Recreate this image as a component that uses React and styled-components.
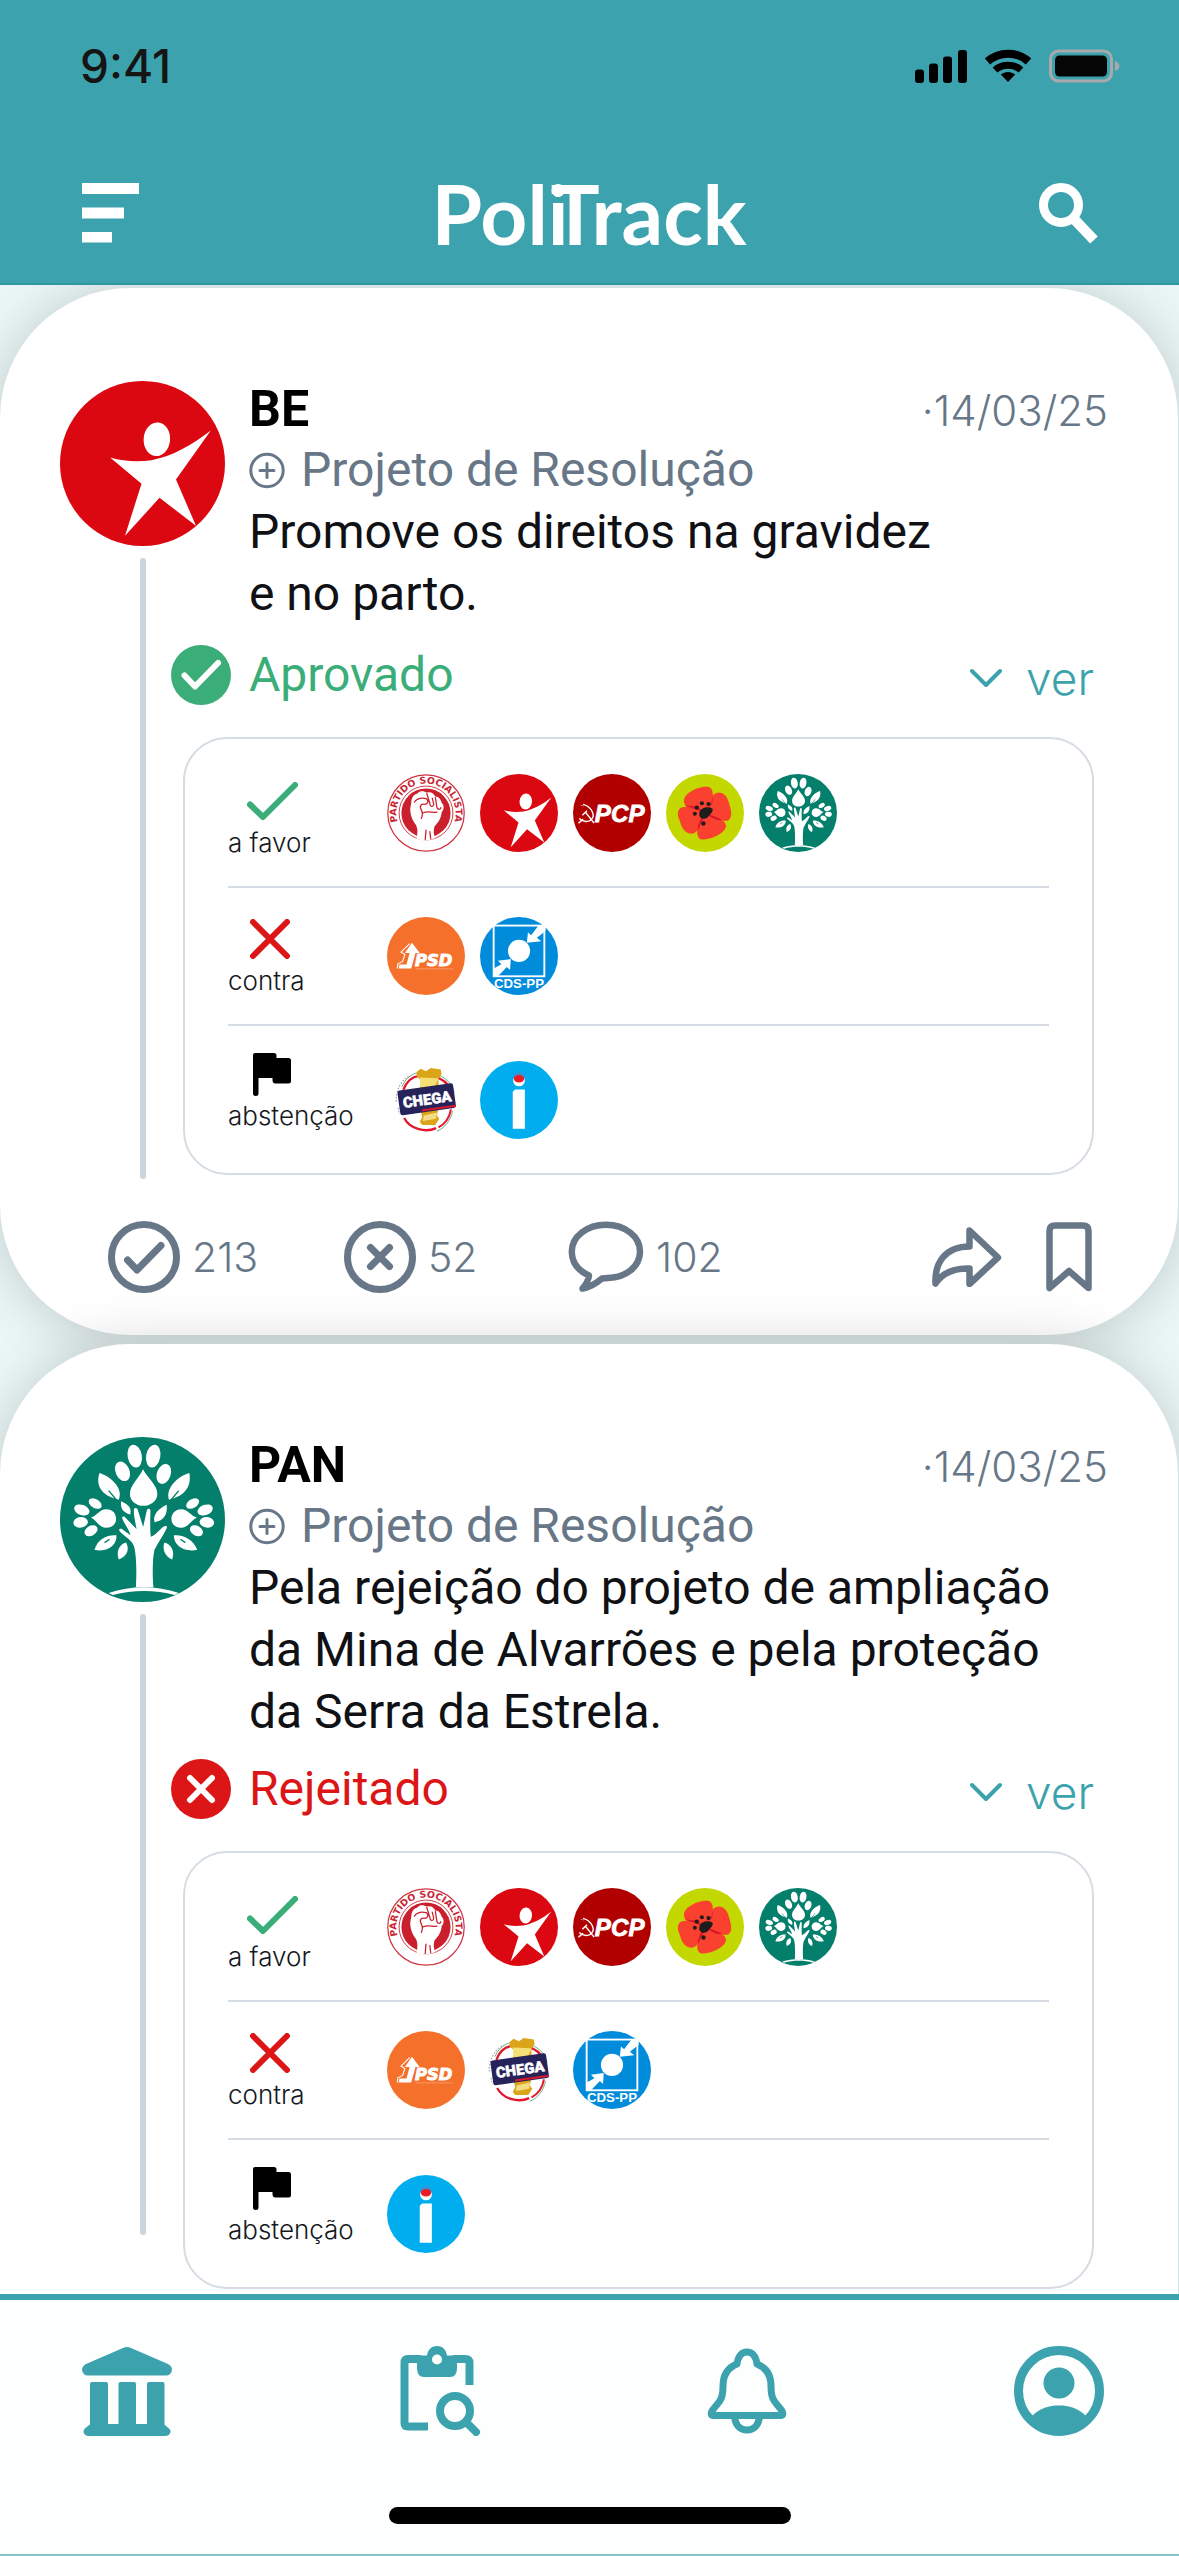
import React from 'react';
import styled, { createGlobalStyle } from 'styled-components';

const teal = '#3ca3ae';
const slate = '#677787';
const green = '#3bad78';
const red = '#dc1617';
const line = '#d5dce3';
const body = 'Roboto, "Liberation Sans", sans-serif';
const light = 'Inter, "Liberation Sans", sans-serif';

const GlobalStyle = createGlobalStyle`
  *, *::before, *::after { box-sizing: border-box; }
  body { margin: 0; background: #eaf7f6; font-family: ${body}; color: #0f1114; }
  h1, h2, p, ul { margin: 0; padding: 0; }
  ul { list-style: none; }
  button { border: 0; padding: 0; background: none; color: inherit; font: inherit; cursor: pointer; }
  a { color: inherit; text-decoration: none; }
  svg { display: block; flex: none; }
`;

const Screen = styled.div`
  display: flex;
  flex-direction: column;
  height: 100vh;
`;

const Header = styled.header`
  flex: none;
  background: ${teal};
  border-bottom: 2px solid #3097a1;
`;

const StatusBar = styled.div`
  display: flex;
  align-items: center;
  justify-content: space-between;
  height: 131px;
  padding: 0 58px 0 80px;
`;

const Clock = styled.span`
  font: 500 46px/1 ${light};
  color: #151515;
`;

const StatusIcons = styled.div`
  display: flex;
  align-items: center;
  gap: 18px;
`;

const TitleBar = styled.div`
  display: flex;
  align-items: center;
  justify-content: space-between;
  height: 152px;
  padding: 12px 80px 0 82px;
  color: #fff;
`;

const Logo = styled.h1`
  font: 700 82px/96px Lato, "Liberation Sans", sans-serif;
`;

const LogoCap = styled.span`
  margin-left: -18px;
`;

const IconButton = styled.button`
  display: flex;
  align-items: center;
`;

const Feed = styled.main`
  flex: 1;
  min-height: 0;
  display: flex;
  flex-direction: column;
  gap: 9px;
  padding: 3px 1px 0 0;
  overflow: hidden;
`;

const Card = styled.article`
  flex: none;
  padding: 93px 70px 42px 60px;
  border-radius: 130px;
  background: #fff;
  box-shadow: 0 2px 56px rgba(0, 0, 0, 0.18);
  &:last-child { min-height: 1104px; }
`;

const CardMain = styled.div`
  display: grid;
  grid-template-columns: 165px minmax(0, 1fr);
  grid-template-rows: auto auto 1fr;
  column-gap: 24px;
`;

const Thread = styled.div`
  grid-row: 1 / span 3;
  grid-column: 1;
  display: flex;
  flex-direction: column;
  align-items: center;
  gap: 12px;
`;

const ThreadLine = styled.div`
  width: 6px;
  height: 621px;
  border-radius: 3px;
  background: #ccd4dc;
`;

const Heading = styled.div`
  grid-column: 2;
  display: flex;
  flex-direction: column;
`;

const TopRow = styled.div`
  display: flex;
  justify-content: space-between;
  height: 58px;
`;

const Party = styled.h2`
  font: 700 50px/56px ${body};
  color: #000;
`;

const PostDate = styled.time`
  font: 300 42px/60px ${light};
  color: ${slate};
`;

const Kind = styled.p`
  display: flex;
  align-items: center;
  gap: 16px;
  font-size: 48px;
  line-height: 62px;
  color: ${slate};
`;

const Summary = styled.p`
  min-height: 128px;
  font-size: 48px;
  line-height: 62px;
  white-space: pre-line;
`;

const Outcome = styled.div`
  grid-column: 2;
  display: flex;
  align-items: center;
  justify-content: space-between;
  height: 92px;
  margin: 0 14px 16px -78px;
`;

const Verdict = styled.p`
  display: flex;
  align-items: center;
  gap: 18px;
  font-size: 48px;
  line-height: 60px;
  color: ${(p) => p.$color};
`;

const More = styled.button`
  display: flex;
  align-items: center;
  gap: 24px;
  padding-top: 6px;
  font: 300 46px/56px ${light};
  color: ${teal};
`;

const Panel = styled.ul`
  grid-column: 2;
  align-self: start;
  margin-left: -66px;
  margin-right: 14px;
  padding: 0 43px;
  border: 2px solid ${line};
  border-radius: 44px;
`;

const VoteRow = styled.li`
  display: grid;
  grid-template-columns: 159px minmax(0, 1fr);
  height: ${(p) => p.$height}px;
  & + & { border-top: 2px solid ${line}; }
`;

const VoteLabel = styled.div`
  padding-top: ${(p) => p.$top}px;
  font: 300 26px/36px ${light};
  color: #15181c;
`;

const VoteIcon = styled.div`
  display: flex;
  align-items: center;
  justify-content: center;
  width: 88px;
  height: 48px;
`;

const Logos = styled.div`
  display: flex;
  align-items: center;
  gap: 15px;
`;

const Actions = styled.div`
  display: grid;
  grid-template-columns: 236px 224px minmax(0, 1fr) auto auto;
  align-items: center;
  padding: 42px 16px 0 48px;
`;

const Action = styled.button`
  display: flex;
  align-items: center;
  gap: 12px;
  font: 300 41px/72px ${light};
  color: ${slate};
  & + &:last-child { margin-left: 44px; }
`;

const TabBar = styled.nav`
  flex: none;
  border-top: 6px solid ${teal};
  border-bottom: 2px solid #86c6cc;
  background: #fdfefe;
`;

const Tabs = styled.div`
  display: flex;
  justify-content: space-between;
  padding: 46px 75px 0 82px;
  color: ${teal};
`;

const HomeIndicator = styled.div`
  width: 402px;
  height: 17px;
  margin: 71px auto 30px;
  border-radius: 9px;
  background: #000;
`;

/* ---------- party emblems ---------- */

const Emblem = ({ size = 78, label, children }) => (
  <svg width={size} height={size} viewBox="0 0 100 100" role="img" aria-label={label}>{children}</svg>
);

const BE = ({ size }) => (
  <Emblem size={size} label="Bloco de Esquerda">
    <circle cx="50" cy="50" r="50" fill="#dc0811" />
    <ellipse cx="58.7" cy="35.3" rx="8" ry="10.2" fill="#fff" transform="rotate(5 58.7 35.3)" />
    <path fill="#fff" d="M30.4 46.4C39 49 48 49 55.5 48C68 45.5 80 39 91.4 30L70.3 59.7L82.4 87.7L60.3 70.8L39.4 93.8L49.4 62.3Z" />
  </Emblem>
);

const PAN = ({ size }) => (
  <Emblem size={size} label="PAN">
    <circle cx="50" cy="50" r="50" fill="#047f6c" />
    <g fill="#fff">
      <ellipse cx="45.3" cy="11.6" rx="4.3" ry="7" transform="rotate(-10 45.3 11.6)" />
      <ellipse cx="56.5" cy="11.6" rx="4.3" ry="7" transform="rotate(10 56.5 11.6)" />
      <ellipse cx="37.9" cy="20.8" rx="4.2" ry="6.2" transform="rotate(-24 37.9 20.8)" />
      <ellipse cx="62.9" cy="22.4" rx="4.2" ry="6.2" transform="rotate(20 62.9 22.4)" />
      <path d="M50.3 19.6C53 25 59 29 59 34.5C59 38.5 55 41.7 50.6 41.7C46 41.7 42.4 38.5 42.4 34.5C42.4 29 48 25 50.3 19.6Z" />
      <path d="M23.9 21.8C31 24 38.5 31 35.6 38C27 36 21 31 23.9 21.8Z" />
      <path d="M78.4 21.8C71 24 63.8 31 66 38C74.5 36 80 31 78.4 21.8Z" />
      <path d="M37 39C41.5 41 43.5 43 42.6 47C38 46 36.6 43 37 39Z" />
      <path d="M64.7 41C59.5 43.5 56 47 57.3 51.6C63 50.5 65.2 47 64.7 41Z" />
      <path d="M18.8 48.8C22 48 24 43.8 28 43.8C32 43.8 34 46.5 34 49.6C34 53 31.5 55 28 55C24 55 22 50.5 18.8 48.8Z" />
      <path d="M83 48.8C79.5 48 77.5 43.8 73.4 43.8C70 43.8 67.5 46.5 67.5 49.6C67.5 53 70 55 73.4 55C77.5 55 79.5 50.5 83 48.8Z" />
      <ellipse cx="13.2" cy="44.2" rx="4.8" ry="3.1" transform="rotate(20 13.2 44.2)" />
      <ellipse cx="21.3" cy="40.3" rx="4.3" ry="2.7" transform="rotate(32 21.3 40.3)" />
      <ellipse cx="12.5" cy="51.7" rx="4.4" ry="3.2" transform="rotate(-8 12.5 51.7)" />
      <ellipse cx="18.8" cy="56.8" rx="4.2" ry="3" transform="rotate(-30 18.8 56.8)" />
      <ellipse cx="88" cy="44.2" rx="4.8" ry="3.1" transform="rotate(-20 88 44.2)" />
      <ellipse cx="80.4" cy="40.3" rx="4.3" ry="2.7" transform="rotate(-32 80.4 40.3)" />
      <ellipse cx="89" cy="51.7" rx="4.4" ry="3.2" transform="rotate(8 89 51.7)" />
      <ellipse cx="82.7" cy="56.8" rx="4.2" ry="3" transform="rotate(30 82.7 56.8)" />
      <path d="M34.2 59.6C34.6 65.5 29 70 20.9 68.4C22.5 62.5 28 59 34.2 59.6Z" />
      <path d="M69 59.6C69 65.5 74.5 70 83.2 68.4C81 62.5 75 59 69 59.6Z" />
      <path d="M40 64C42.3 68 41 72 35.6 74.3C34 69.5 35.5 65.5 40 64Z" />
      <path d="M63.3 64C61.8 68 63.5 72.5 68 74.3C69.5 69.5 68 65.5 63.3 64Z" />
      <path d="M46 91C46.4 84 46.6 72 44.8 66C43 62 39 60.5 36 57C35.5 55.5 37 55.2 38.5 56.5L42.8 59.5C41.5 55.5 38.5 52 37.6 49C37.8 47.8 39.2 48 40 49.2L46.4 55.8C45.5 51 44.5 47 44.8 43.6C45.5 42.6 46.8 43 47.2 44.4L50.4 54.5L52.6 44.6C53 43.2 54.6 43.2 54.8 44.6C54.8 49 54.4 55 55 60.5C57.8 59.8 60 56.5 62.4 54.6C64 53.4 65.4 53.8 64.6 55.4C62 60.5 59.4 64 57.2 68.5C56 74 56 84 56.6 91Z" />
      <path d="M29.5 94.6C43 89.8 58.5 89.8 72 94.6L69.5 95.8C58 92.6 44 92.6 32 95.8Z" />
    </g>
    <path d="M29.5 32.5L34.5 38.5M72 32.5L67 38.5M30 62L27 64M73 62L76 64" stroke="#047f6c" strokeWidth="0.8" />
  </Emblem>
);

const PS = () => (
  <Emblem label="Partido Socialista">
    <defs>
      <path id="ps-arc" d="M21.7 75.5A38 38 0 1 1 78.3 75.5" />
    </defs>
    <circle cx="50" cy="50" r="49" fill="#fff" stroke="#cf3340" strokeWidth="1.6" />
    <circle cx="50" cy="50" r="34.5" fill="none" stroke="#cf3340" strokeWidth="1.2" />
    <circle cx="50" cy="50" r="31.5" fill="#ca1f2d" />
    <text fill="#c92533" fontFamily="DejaVu Sans, sans-serif" fontWeight="700" fontSize="12">
      <textPath href="#ps-arc" startOffset="50%" textAnchor="middle">PARTIDO SOCIALISTA</textPath>
    </text>
    <path fill="#fff" d="M38 83C39 76 40 71 37 65C31 57 28 47 31 38C31 31 34 26 39 25C42 21 48 22 51 24C56 22 60 25 62 29C67 29 69 33 70 37C74 40 73 47 70 49C70 56 65 63 61 67C59 73 60 78 62 82C54 86 45 86 38 83Z" />
    <path fill="none" stroke="#ca1f2d" strokeWidth="1.6" strokeLinecap="round" d="M35 36C40 30 45 30 51 32C54 35 52 39 48 39C44 38 41 41 44 46C46 50 46 53 44 57M51 25L55 38C55 42 59 43 60 39L58 31M62 30L64 43C65 46 69 46 69 43M46 50C52 47 59 50 64 49M50 72L49 84M55 74L56 83" />
  </Emblem>
);

const PCP = () => (
  <Emblem label="PCP">
    <circle cx="50" cy="50" r="50" fill="#b10000" />
    <text x="28" y="62" fill="#fff" stroke="#fff" strokeWidth="1" fontFamily="Liberation Sans, sans-serif" fontWeight="700" fontStyle="italic" fontSize="31">PCP</text>
    <path fill="none" stroke="#fff" strokeWidth="1.8" d="M13 39C24 42 31 55 21 60C16 62 11 60 8 57M7 63L13 58M16 49L27 63M12 53L18 47" />
    <path d="M10 40L14 41" stroke="#e46a6a" strokeWidth="1.4" />
  </Emblem>
);

const Livre = () => (
  <Emblem label="Livre">
    <circle cx="50" cy="50" r="50" fill="#c2d800" />
    <g fill="#fa4130">
      <path d="M23 35C22 24 45 14 56 17C63 22 61 38 51 50C40 50 24 46 23 35Z" />
      <path d="M60 28C66 20 77 24 80 35C84 47 86 56 79 60C69 60 58 58 51 50C55 42 56 34 60 28Z" />
      <path d="M51 50C61 54 75 57 77 66C77 74 62 84 45 84C38 81 40 70 41 66Z" />
      <path d="M17 45C22 39 38 42 51 50C47 60 43 72 36 76C29 78 21 74 18 61C15 54 14 50 17 45Z" />
    </g>
    <path fill="#d9152b" d="M51 50L57 40L61 27L59 38ZM51 50L34 44L24 40L40 42ZM51 50C58 57 66 60 72 59C66 55 58 53 51 50ZM51 50C48 58 43 66 41 72C40 66 44 56 51 50Z" />
    <path fill="#1d1d1b" d="M43 49C45 42 56 41 60 45C60 50 56 52 53 56C48 59 41 57 43 49Z" />
    <g fill="#1d1d1b">
      <circle cx="39.5" cy="43" r="2.7" /><circle cx="46" cy="37.5" r="2.7" /><circle cx="54.5" cy="38.5" r="2.7" />
      <circle cx="37" cy="51" r="2.6" /><circle cx="48" cy="63.5" r="2.8" />
    </g>
  </Emblem>
);

const PSD = () => (
  <Emblem label="PSD">
    <circle cx="50" cy="50" r="50" fill="#f5702a" />
    <text x="36" y="62.5" fill="#fff" stroke="#fff" strokeWidth="1.2" fontFamily="DejaVu Sans, sans-serif" fontWeight="700" fontStyle="italic" fontSize="21">PSD</text>
    <path fill="#fff" d="M32 33L42 46L36.5 46L31 66L15 66L16 61L25 61L29 46L23 46Z" />
    <path fill="none" stroke="#fff" strokeWidth="1.4" d="M29 34L18 45L23 48L20 57L14 60L13 66" />
    <path d="M37 66.5H84" stroke="#fbc3a2" strokeWidth="1" strokeDasharray="2 1" />
  </Emblem>
);

const CDS = () => (
  <Emblem label="CDS-PP">
    <circle cx="50" cy="50" r="50" fill="#008bdb" />
    <rect x="17.5" y="11" width="65" height="65" fill="none" stroke="#fff" strokeWidth="2.4" />
    <circle cx="50" cy="43.5" r="14.2" fill="#fff" />
    <path fill="#fff" d="M60 33L61.5 20L65.5 23.5L75 11L84 10V18L73 26.5L78.5 31Z" />
    <path fill="#fff" d="M39.5 54L38.5 68L34.5 64L23 76L17 77V66.5L27.5 60.5L23 56Z" />
    <text x="50" y="90.5" textAnchor="middle" fill="#fff" fontFamily="Liberation Sans, sans-serif" fontWeight="700" fontSize="17">CDS-PP</text>
  </Emblem>
);

const Chega = () => (
  <Emblem label="Chega">
    <path fill="none" stroke="#e3172c" strokeWidth="3" d="M21 37C25 26 33 20 41 19M60 20C70 22 78 28 82 38M22 73C30 88 50 92 63 86" />
    <path fill="none" stroke="#3d9a5f" strokeWidth="1" d="M19 33C24 22 32 16 40 15M66 18C76 22 84 30 86 40M84 64C82 76 74 86 64 90" />
    <path fill="none" stroke="#9b9ba8" strokeWidth="1.4" strokeDasharray="2 2" d="M12 52C11 38 18 24 30 18M14 60L16 68" />
    <path fill="none" stroke="#e3172c" strokeWidth="2.6" d="M82 62C80 73 74 81 66 85" />
    <path fill="#dba51a" d="M38 14L43 10L50 13L56 9L69 11L70 17L66 22L66 36L42 38L44 25L38 20Z" />
    <path fill="#f6df75" d="M42 21L66 22L62 32L43 34Z" />
    <path fill="#dba51a" d="M43 62L66 60L64 70L67 74L62 82L45 82L42 78L45 72Z" />
    <path fill="#f3dc84" d="M47 70L64 66L63 74L46 77Z" />
    <g transform="rotate(-8 51 50)">
      <rect x="15" y="33" width="72" height="32" rx="3" fill="#26235b" />
      <path d="M43 62.5H87" stroke="#d9182b" strokeWidth="2.4" />
      <text x="51.5" y="56" textAnchor="middle" fill="#fff" stroke="#fff" strokeWidth="0.6" fontFamily="Roboto, sans-serif" fontWeight="900" fontSize="19">CHEGA</text>
    </g>
  </Emblem>
);

const IL = () => (
  <Emblem label="Iniciativa Liberal">
    <circle cx="50" cy="50" r="50" fill="#00aeef" />
    <path fill="#fff" d="M45 36.5H57.5V87H42V39.5Z" />
    <circle cx="50" cy="25" r="7.5" fill="#fff" />
    <path fill="#3c8fd0" d="M42.6 22C42.6 12 57.4 12 57.4 22Z" />
    <ellipse cx="50" cy="22.8" rx="6.6" ry="4.8" fill="#ed1c24" />
  </Emblem>
);

const emblems = { BE, PAN, PS, PCP, Livre, PSD, CDS, Chega, IL };

/* ---------- interface icons ---------- */

const Signal = () => (
  <svg width="52" height="34" viewBox="0 0 52 34" aria-hidden="true">
    <rect x="0" y="20.5" width="9" height="13.5" rx="3" /><rect x="14" y="14.5" width="9" height="19.5" rx="3" />
    <rect x="28" y="7.5" width="9" height="26.5" rx="3" /><rect x="43" y="1" width="9" height="33" rx="3" />
  </svg>
);

const Wifi = () => (
  <svg width="46" height="34" viewBox="0 0 46 34" aria-hidden="true">
    <path fill="none" stroke="#000" strokeWidth="8" d="M2.5 12.5C14 2 32 2 43.5 12.5" />
    <path fill="none" stroke="#000" strokeWidth="7" d="M10 21C17 14.5 29 14.5 36 21" />
    <path d="M15.8 25.5C20 22 26 22 30.2 25.5L23 33Z" />
  </svg>
);

const Battery = () => (
  <svg width="72" height="34" viewBox="0 0 72 34" aria-hidden="true">
    <rect x="1.5" y="2" width="61" height="30" rx="8" fill="none" stroke="#a9a9ab" strokeWidth="3" />
    <rect x="6" y="6.5" width="52" height="21" rx="4.5" fill="#050505" />
    <path fill="#a9a9ab" d="M66 12C72 14 72 20 66 22Z" />
  </svg>
);

const Menu = () => (
  <svg width="57" height="60" viewBox="0 0 57 60" aria-hidden="true" fill="#fff">
    <rect width="57" height="11" /><rect y="24.5" width="42" height="11" /><rect y="49" width="30" height="10.5" />
  </svg>
);

const Search = () => (
  <svg width="60" height="63" viewBox="0 0 60 63" aria-hidden="true" fill="none" stroke="#fff">
    <circle cx="22" cy="23" r="17.5" strokeWidth="9" />
    <path d="M34.5 36.5L55 58" strokeWidth="10.5" />
  </svg>
);

const Plus = () => (
  <svg width="36" height="37" viewBox="0 0 36 37" aria-hidden="true" fill="none" stroke={slate} strokeWidth="3">
    <circle cx="18" cy="18.5" r="16.2" /><path strokeLinecap="round" d="M11 18.5H25M18 11.5V25.5" />
  </svg>
);

const BadgeCheck = () => (
  <svg width="60" height="60" viewBox="0 0 60 60" aria-hidden="true">
    <circle cx="30" cy="30" r="30" fill={green} />
    <path fill="none" stroke="#fff" strokeWidth="6" strokeLinecap="round" strokeLinejoin="round" d="M13.5 30.5L24 41.5L47 18" />
  </svg>
);

const BadgeCross = () => (
  <svg width="60" height="60" viewBox="0 0 60 60" aria-hidden="true">
    <circle cx="30" cy="30" r="30" fill={red} />
    <path stroke="#fff" strokeWidth="6" strokeLinecap="round" d="M19 19L41 41M41 19L19 41" />
  </svg>
);

const Chevron = () => (
  <svg width="32" height="20" viewBox="0 0 32 20" aria-hidden="true" fill="none" stroke={teal} strokeWidth="4" strokeLinecap="round" strokeLinejoin="round">
    <path d="M2 3L16 17L30 3" />
  </svg>
);

const Favor = () => (
  <svg width="51" height="39" viewBox="0 0 51 39" aria-hidden="true" fill="none" stroke={green} strokeWidth="6" strokeLinecap="round" strokeLinejoin="round">
    <path d="M3 22.5L16 35L48 3" />
  </svg>
);

const Against = () => (
  <svg width="46" height="40" viewBox="0 0 46 40" aria-hidden="true" stroke={red} strokeWidth="6" strokeLinecap="round">
    <path d="M4 3L38 37M38 3L4 37" />
  </svg>
);

const Flag = () => (
  <svg width="38" height="43" viewBox="0 0 38 43" aria-hidden="true">
    <path d="M2 0H21Q23.5 0 23.5 2.5V5H35.5Q38 5 38 7.5V28Q38 30.5 35.5 30.5H22.5Q19.5 30.5 19.5 27V25H5.5V40.5Q5.5 43 2.8 43Q0 43 0 40.5V2Q0 0 2 0Z" />
  </svg>
);

const LikeIcon = () => (
  <svg width="72" height="72" viewBox="0 0 72 72" aria-hidden="true" fill="none" stroke={slate} strokeWidth="7">
    <circle cx="36" cy="36" r="32.5" />
    <path strokeLinecap="round" strokeLinejoin="round" d="M19.5 39L29 49L53 24.5" />
  </svg>
);

const DislikeIcon = () => (
  <svg width="72" height="72" viewBox="0 0 72 72" aria-hidden="true" fill="none" stroke={slate} strokeWidth="7">
    <circle cx="36" cy="36" r="32.5" />
    <path strokeLinecap="round" d="M26.5 26.5L45.5 45.5M45.5 26.5L26.5 45.5" />
  </svg>
);

const CommentIcon = () => (
  <svg width="76" height="72" viewBox="0 0 76 72" aria-hidden="true" fill="none" stroke={slate} strokeWidth="6.5" strokeLinejoin="round">
    <path d="M38 3.8C57 3.8 72 15.5 72 30.5C72 45.5 58 56.5 40 57L34 57.5C28 62.5 22 66.5 14.5 67.5C18.5 63 20.5 59 21 54.5C10 49.5 3.8 41 3.8 30.5C3.8 15.5 19 3.8 38 3.8Z" />
  </svg>
);

const ShareIcon = () => (
  <svg width="71" height="60" viewBox="0 0 71 60" aria-hidden="true" fill="none" stroke={slate} strokeWidth="6.5" strokeLinejoin="round">
    <path d="M38.5 3.5L67 30.5L38.5 57V41.5C23 41 12 45 4.5 56.5C3.5 35 15 19.5 38.5 19.5Z" />
  </svg>
);

const SaveIcon = () => (
  <svg width="46" height="70" viewBox="0 0 46 70" aria-hidden="true" fill="none" stroke={slate} strokeWidth="6.5" strokeLinejoin="round">
    <path d="M9 3.5H37Q42.5 3.5 42.5 9V66L23 49L3.5 66V9Q3.5 3.5 9 3.5Z" />
  </svg>
);

const BankIcon = () => (
  <svg width="90" height="90" viewBox="0 0 90 90" aria-hidden="true" fill="currentColor">
    <path d="M41 2Q45 0 49 2L86 18Q90 20 90 24Q89 29.5 84 29.5H6Q1 29.5 0 24Q0 20 4 18Z" />
    <rect x="8" y="36" width="18" height="48" rx="2" /><rect x="36.5" y="36" width="17.5" height="48" rx="2" /><rect x="65" y="36" width="17.5" height="48" rx="2" />
    <path d="M9 78H81Q83 79 86.5 82Q89 84 88.5 86Q87.5 90 83 90H7Q2.5 90 1.5 86Q1 84 3.5 82Q7 79 9 78Z" />
  </svg>
);

const ClipboardIcon = () => (
  <svg width="90" height="90" viewBox="0 0 90 90" aria-hidden="true" fill="none" stroke="currentColor" strokeWidth="8">
    <path d="M35 80.5H15Q11.5 80.5 11.5 77V17Q11.5 13 15 13H28M60 13H72Q76.5 13 76.5 17V39" />
    <path fill="currentColor" stroke="none" fillRule="evenodd" d="M34 9.5C35 3 39 0 44 0C49 0 53 3 54 9.5H64V22Q64 31 57 31H31Q24 31 24 22V9.5ZM44 8.5A5 5 0 1 0 44 18.5A5 5 0 1 0 44 8.5Z" />
    <circle cx="62" cy="65" r="15" />
    <path strokeLinecap="round" d="M74 77L83 86" />
  </svg>
);

const BellIcon = () => (
  <svg width="90" height="90" viewBox="0 0 90 90" aria-hidden="true" fill="none" stroke="currentColor" strokeWidth="7" strokeLinejoin="round">
    <path d="M34 18C35 10 39 6 44 6C49 6 53 10 54 18C64 22 68 30 68 40C68 56 73 56 79 65Q81 69 78 69.5H10Q7 69 9 65C15 56 20 56 20 40C20 30 24 22 34 18Z" />
    <path d="M31.5 70C32 79 37 84 44 84C51 84 56 79 56.5 70" />
  </svg>
);

const ProfileIcon = () => (
  <svg width="90" height="90" viewBox="0 0 90 90" aria-hidden="true">
    <circle cx="45" cy="45" r="40.5" fill="none" stroke="currentColor" strokeWidth="9" />
    <circle cx="45" cy="37" r="15.5" fill="currentColor" />
    <path fill="currentColor" d="M18 70C26 62 35 59.5 45 59.5C55 59.5 64 62 72 70C64 84 55 88 45 88C35 88 26 84 18 70Z" />
  </svg>
);

/* ---------- content ---------- */

const voteKinds = [
  { key: 'favor', label: 'a favor', Icon: Favor, top: 38, height: 147 },
  { key: 'contra', label: 'contra', Icon: Against, top: 27, height: 138 },
  { key: 'abstencao', label: 'abstenção', Icon: Flag, top: 24, height: 149 },
];

const posts = [
  {
    party: 'BE',
    date: '14/03/25',
    summary: 'Promove os direitos na gravidez\ne no parto.',
    approved: true,
    votes: { favor: ['PS', 'BE', 'PCP', 'Livre', 'PAN'], contra: ['PSD', 'CDS'], abstencao: ['Chega', 'IL'] },
    counts: { likes: 213, dislikes: 52, comments: 102 },
  },
  {
    party: 'PAN',
    date: '14/03/25',
    summary: 'Pela rejeição do projeto de ampliação\nda Mina de Alvarrões e pela proteção\nda Serra da Estrela.',
    approved: false,
    votes: { favor: ['PS', 'BE', 'PCP', 'Livre', 'PAN'], contra: ['PSD', 'Chega', 'CDS'], abstencao: ['IL'] },
  },
];

function Post({ post }) {
  const Avatar = emblems[post.party];
  return (
    <Card>
      <CardMain>
        <Thread>
          <Avatar size={165} />
          <ThreadLine />
        </Thread>
        <Heading>
          <TopRow>
            <Party>{post.party}</Party>
            <PostDate>·{post.date}</PostDate>
          </TopRow>
          <Kind><Plus />Projeto de Resolução</Kind>
          <Summary>{post.summary}</Summary>
        </Heading>
        <Outcome>
          <Verdict $color={post.approved ? green : red}>
            {post.approved ? <BadgeCheck /> : <BadgeCross />}
            {post.approved ? 'Aprovado' : 'Rejeitado'}
          </Verdict>
          <More type="button"><Chevron />ver</More>
        </Outcome>
        <Panel>
          {voteKinds.map(({ key, label, Icon, top, height }) => (
            <VoteRow key={key} $height={height}>
              <VoteLabel $top={top}>
                <VoteIcon><Icon /></VoteIcon>
                {label}
              </VoteLabel>
              <Logos>
                {post.votes[key].map((name) => {
                  const PartyLogo = emblems[name];
                  return <PartyLogo key={name} />;
                })}
              </Logos>
            </VoteRow>
          ))}
        </Panel>
      </CardMain>
      {post.counts && (
        <Actions>
          <Action type="button"><LikeIcon />{post.counts.likes}</Action>
          <Action type="button"><DislikeIcon />{post.counts.dislikes}</Action>
          <Action type="button"><CommentIcon />{post.counts.comments}</Action>
          <Action type="button" aria-label="Partilhar"><ShareIcon /></Action>
          <Action type="button" aria-label="Guardar"><SaveIcon /></Action>
        </Actions>
      )}
    </Card>
  );
}

export default function App() {
  return (
    <Screen>
      <GlobalStyle />
      <Header>
        <StatusBar>
          <Clock>9:41</Clock>
          <StatusIcons><Signal /><Wifi /><Battery /></StatusIcons>
        </StatusBar>
        <TitleBar>
          <IconButton type="button" aria-label="Menu"><Menu /></IconButton>
          <Logo>Poli<LogoCap>T</LogoCap>rack</Logo>
          <IconButton type="button" aria-label="Pesquisar"><Search /></IconButton>
        </TitleBar>
      </Header>
      <Feed>
        {posts.map((post) => <Post key={post.party} post={post} />)}
      </Feed>
      <TabBar>
        <Tabs>
          <a href="#parlamento" aria-label="Parlamento"><BankIcon /></a>
          <a href="#propostas" aria-label="Propostas"><ClipboardIcon /></a>
          <a href="#notificacoes" aria-label="Notificações"><BellIcon /></a>
          <a href="#perfil" aria-label="Perfil"><ProfileIcon /></a>
        </Tabs>
        <HomeIndicator />
      </TabBar>
    </Screen>
  );
}
